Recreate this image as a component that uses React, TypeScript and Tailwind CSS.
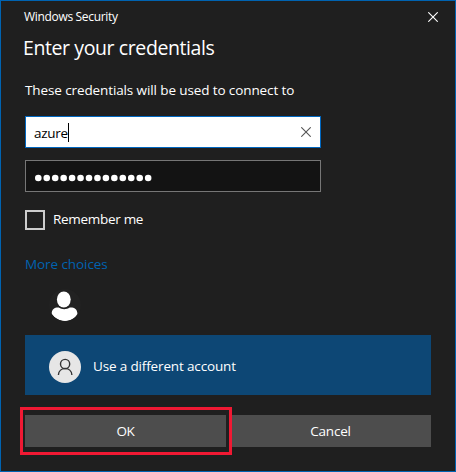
const DOTS = Array.from({ length: 14 }, (_, i) => i);

function Cross({ size, color }: { size: number; color: string }) {
  return (
    <svg width={size} height={size} viewBox="0 0 10 10" fill="none" stroke={color} strokeWidth="1.1">
      <path d="M0.3 0.3 L9.7 9.7 M9.7 0.3 L0.3 9.7" />
    </svg>
  );
}

export default function App() {
  return (
    <div className="flex h-[472px] w-[456px] flex-col border border-[#0063b1] bg-[#1f1f1f] pl-6 pr-6 font-['Open_Sans','Noto_Sans',sans-serif] text-[13.5px] text-white">
      <header className="flex h-[31px] items-center justify-between">
        <span className="-ml-px whitespace-nowrap text-[12px] leading-[16px] tracking-[-0.32px]">Windows Security</span>
        <button className="-mr-[7px]" aria-label="Close">
          <Cross size={10} color="#fff" />
        </button>
      </header>

      <h1 className="-ml-[2px] h-[32px] whitespace-nowrap text-[19.5px] leading-[32px] tracking-[-0.4px]">Enter your credentials</h1>
      <p className="mt-[16px] h-[20px] whitespace-nowrap leading-[20px] tracking-[-0.11px]">These credentials will be used to connect to</p>

      <div className="mt-[16px] flex h-8 w-[296px] items-center justify-between border border-[#0067c0] bg-white pl-2 pr-[9px] text-black">
        <div className="flex items-center">
          <span className="w-[34px] pt-[2px] leading-[20px] tracking-[-0.3px]">azure</span>
          <span className="h-[19px] w-px bg-black" />
        </div>
        <Cross size={10} color="#555" />
      </div>

      <div className="mt-3 flex h-8 w-[296px] items-center border border-[#767676] bg-[#131313] pl-[9px] pt-1">
        <svg width="118" height="8" viewBox="0 0 118 8" fill="#fff">
          {DOTS.map((i) => (
            <circle key={i} cx={3.3 + i * 8.45} cy="4" r="3.3" />
          ))}
        </svg>
      </div>

      <label className="mt-[18px] flex h-5 items-center gap-2">
        <span className="size-5 border-2 border-[#cccccc]" />
        <span className="whitespace-nowrap pb-[2px] leading-[20px] tracking-[-0.3px]">Remember me</span>
      </label>

      <a className="mt-[24px] h-[20px] whitespace-nowrap leading-[20px] tracking-[-0.08px] text-[#0063b1]">More choices</a>

      <div className="mt-[15px] flex h-8 pl-6">
        <svg width="32" height="32" viewBox="0 0 32 32">
          <circle cx="16" cy="16" r="16" fill="#222" />
          <clipPath id="avatar">
            <circle cx="16" cy="16" r="16" />
          </clipPath>
          <g fill="#fff" clipPath="url(#avatar)">
            <ellipse cx="14.8" cy="10.5" rx="6.9" ry="8" />
            <path d="M2.7 25 C2.7 20 6 18.3 9.8 18.6 C13 20.8 17.5 20.8 20.8 18.6 C25 18.3 28.4 20 28.4 25 C26 29.5 21 32 16 32 C10.5 32 5.8 29.5 2.7 25Z" />
          </g>
        </svg>
      </div>

      <div className="mt-[14px] flex h-[60px] w-[406px] items-center gap-3 bg-[#0d4775] pl-6 pt-[4px]">
        <svg width="32" height="32" viewBox="0 0 32 32">
          <circle cx="16" cy="16" r="16" fill="#e6e6e6" />
          <g fill="none" stroke="#333" strokeWidth="1.4">
            <circle cx="16.1" cy="13" r="4.6" />
            <path d="M9.4 24 C9.6 15.4 22.7 15.4 22.9 24" />
          </g>
        </svg>
        <span className="whitespace-nowrap pb-[2px] leading-[20px] tracking-[-0.15px]">Use a different account</span>
      </div>

      <div className="relative mt-5 flex h-8 w-[406px] gap-1">
        <button className="h-8 w-[201px] bg-[#4d4d4d] tracking-[-0.3px]">OK</button>
        <button className="h-8 w-[201px] bg-[#4d4d4d] tracking-[-0.2px]">Cancel</button>
        <div className="absolute -left-[5px] -top-2 h-12 w-[212px] border-[3px] border-[#f01933]" />
      </div>
    </div>
  );
}
